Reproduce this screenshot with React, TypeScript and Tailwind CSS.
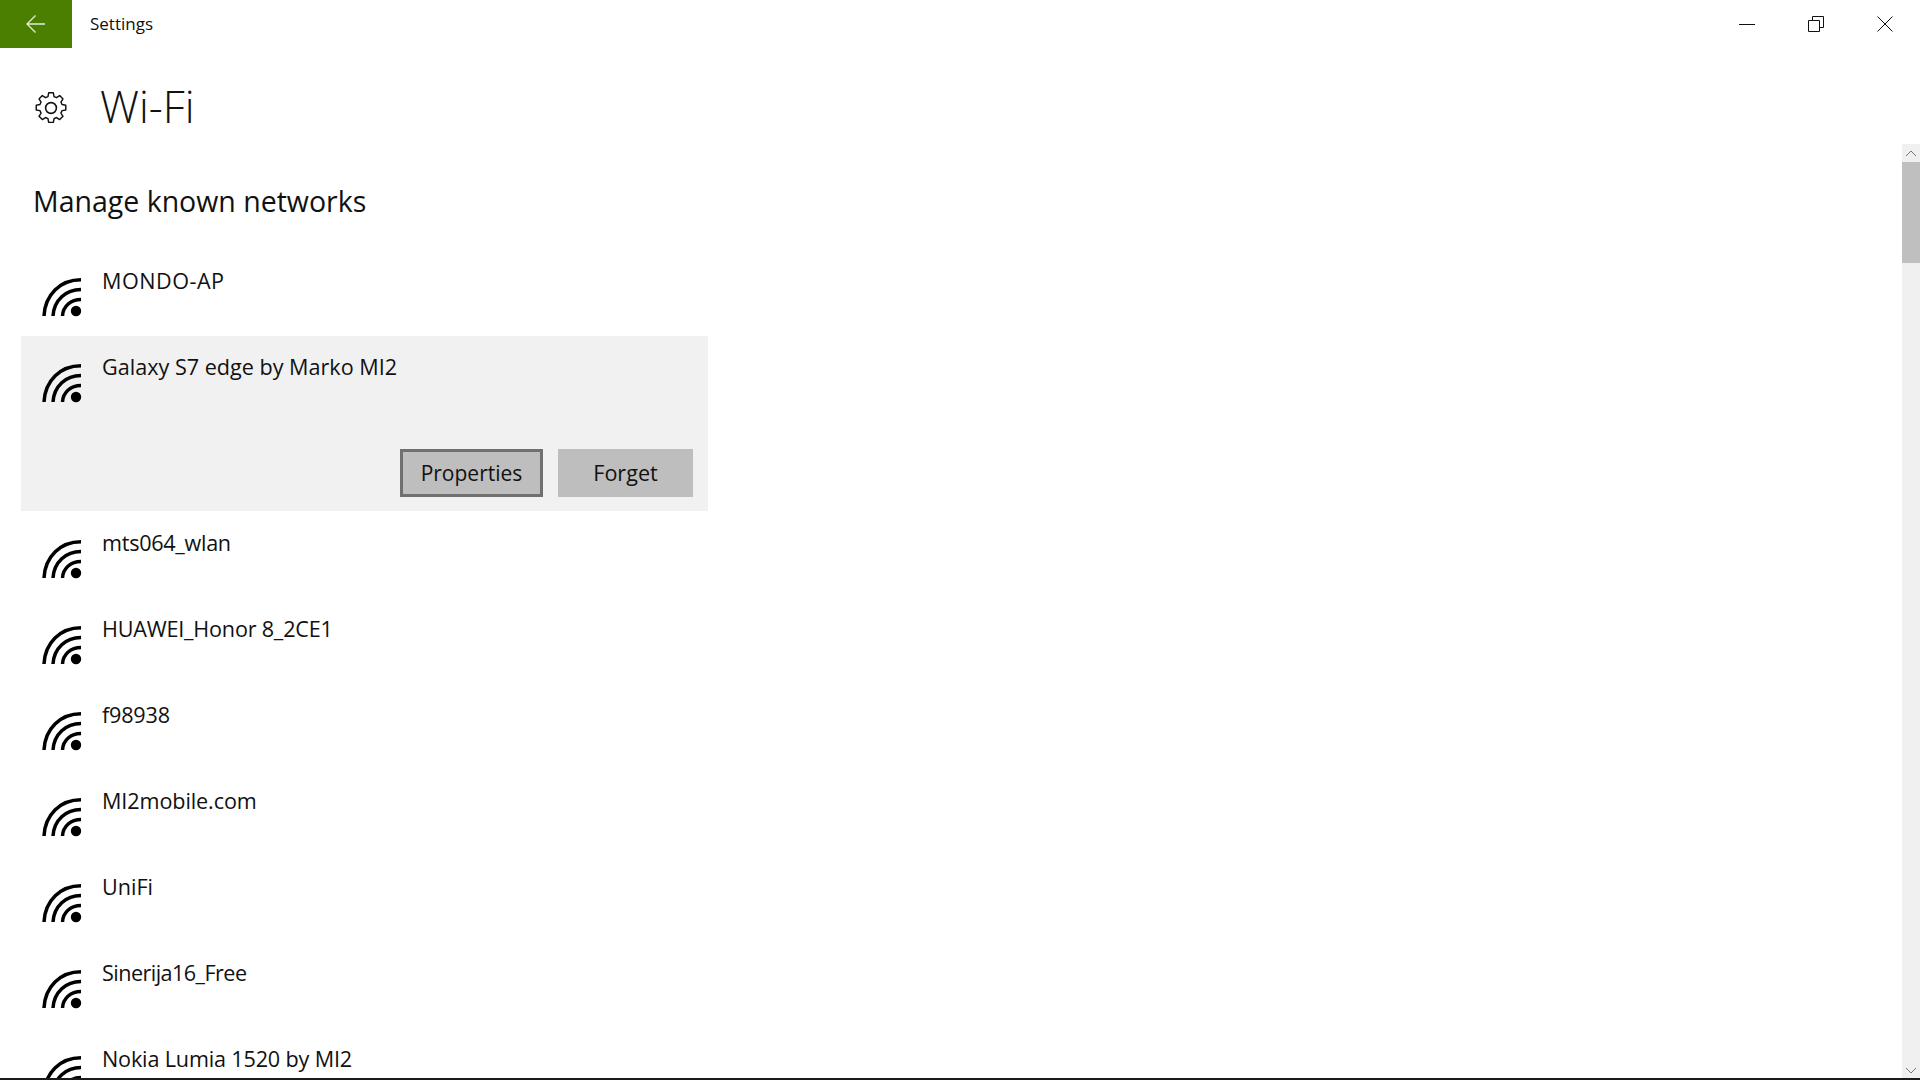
import React from "react";

const font = { fontFamily: '"Open Sans", "Noto Sans", sans-serif' };

function WifiIcon() {
  return (
    <svg width="40" height="40" viewBox="0 0 40 40" fill="none" className="shrink-0">
      <path d="M39 1.8C18 1.8 3 17 2 38" stroke="#000" strokeWidth="3.5" />
      <path d="M39 11.5C24 11.5 12 22 11 38" stroke="#000" strokeWidth="3.5" />
      <path d="M39 21.5C29 21.5 21 28 20.5 38" stroke="#000" strokeWidth="3.5" />
      <circle cx="34" cy="33" r="5.2" fill="#000" />
    </svg>
  );
}

function Gear() {
  return (
    <svg width="36" height="36" viewBox="0 0 24 24" fill="none" stroke="#111" strokeWidth="1.05" strokeLinejoin="round">
      <path d="M10.3 2.2h3.4l.5 2.7 1.8.8 2.3-1.5 2.4 2.4-1.5 2.3.8 1.8 2.7.5v3.4l-2.7.5-.8 1.8 1.5 2.3-2.4 2.4-2.3-1.5-1.8.8-.5 2.7h-3.4l-.5-2.7-1.8-.8-2.3 1.5-2.4-2.4 1.5-2.3-.8-1.8-2.7-.5v-3.4l2.7-.5.8-1.8-1.5-2.3 2.4-2.4 2.3 1.5 1.8-.8z" transform="translate(12 12) scale(.92) translate(-12 -13.2)" />
      <circle cx="12" cy="12" r="3.6" />
    </svg>
  );
}

function Row({ name, tracking = "", children, selected }: { name: string; tracking?: string; children?: React.ReactNode; selected?: boolean }) {
  return (
    <div className={selected ? "w-[687px] ml-[21px] mb-[1px] bg-[#f1f1f1] h-[175px] shrink-0" : "w-[687px] ml-[21px] h-[86px] shrink-0"}>
      <div className="flex">
        <div className="pl-[21px] pt-[28px]"><WifiIcon /></div>
        <div className={"pl-[20px] pt-[14px] text-[21.6px] leading-[34px] text-[#111] " + tracking}>{name}</div>
      </div>
      {children}
    </div>
  );
}

export default function App() {
  const rest = [
    { n: "mts064_wlan", t: "tracking-[-0.28px]" },
    { n: "HUAWEI_Honor 8_2CE1", t: "tracking-[-0.2px]" },
    { n: "f98938", t: "tracking-[-0.2px]" },
    { n: "MI2mobile.com", t: "tracking-[-0.1px]" },
    { n: "UniFi", t: "" },
    { n: "Sinerija16_Free", t: "tracking-[-0.55px]" },
    { n: "Nokia Lumia 1520 by MI2", t: "tracking-[-0.16px]" },
  ];
  return (
    <div className="w-[1920px] h-[1080px] overflow-hidden bg-white flex flex-col" style={font}>
      <header className="h-12 flex items-center shrink-0">
        <div className="w-[72px] h-12 bg-[#4b7f02] flex items-center justify-center">
          <svg width="20" height="20" viewBox="0 0 20 20" fill="none" stroke="#e4efd2" strokeWidth="1.3"><path d="M19 10H1M9.5 1.5 1 10l8.5 8.5" /></svg>
        </div>
        <div className="ml-[18px] text-[17px] text-[#111]">Settings</div>
        <div className="ml-auto flex items-center">
          <div className="w-[69px] flex justify-center"><svg width="16" height="16" viewBox="0 0 16 16" stroke="#111" strokeWidth="1"><path d="M0 8.5h16" /></svg></div>
          <div className="w-[69px] flex justify-center"><svg width="16" height="16" viewBox="0 0 16 16" fill="none" stroke="#111" strokeWidth="1"><path d="M.5 4.5h11v11H.5zM4.5 4.5V.5h11v11h-4" /></svg></div>
          <div className="w-[69px] mr-[1px] flex justify-center"><svg width="16" height="16" viewBox="0 0 16 16" fill="none" stroke="#111" strokeWidth="1"><path d="M.5.5l15 15M15.5.5l-15 15" /></svg></div>
        </div>
      </header>
      <div className="flex flex-1 min-h-0">
        <main className="flex-1 min-w-0 overflow-hidden">
          <div className="flex items-center h-[56px] mt-[31px]">
            <div className="ml-[33px] pt-[2px]"><Gear /></div>
            <h1 className="ml-[31px] text-[43.6px] font-light text-[#111] leading-none">Wi-Fi</h1>
          </div>
          <h2 className="ml-[33px] mt-[46px] text-[28.5px] text-[#111] leading-[40px]">Manage known networks</h2>
          <div className="mt-[29px] flex flex-col">
            <Row name="MONDO-AP" tracking="tracking-[0.5px]" />
            <Row name="Galaxy S7 edge by Marko MI2" selected>
              <div className="flex justify-end gap-[15px] pr-[15px] mt-[45px]">
                <button className="w-[143px] h-12 pt-[2px] bg-[#bebebe] border-[3px] border-[#707070] text-[21px] text-[#111]">Properties</button>
                <button className="w-[135px] h-12 bg-[#bebebe] text-[21.6px] text-[#111]">Forget</button>
              </div>
            </Row>
            {rest.map((r) => <Row key={r.n} name={r.n} tracking={r.t} />)}
          </div>
        </main>
        <aside className="w-[18px] mt-[96px] bg-[#f0f0f0] flex flex-col shrink-0">
          <div className="h-[18px] flex items-center justify-center">
            <svg width="12" height="8" viewBox="0 0 12 8" fill="none" stroke="#777" strokeWidth="1"><path d="M1 7l5-5 5 5" /></svg>
          </div>
          <div className="h-[101px] bg-[#bfbfbf]" />
          <div className="flex-1" />
          <div className="h-[14px] flex items-center justify-center">
            <svg width="12" height="8" viewBox="0 0 12 8" fill="none" stroke="#777" strokeWidth="1"><path d="M1 1l5 5 5-5" /></svg>
          </div>
        </aside>
      </div>
      <div className="h-[2px] bg-[#1a1a1a] shrink-0" />
    </div>
  );
}
